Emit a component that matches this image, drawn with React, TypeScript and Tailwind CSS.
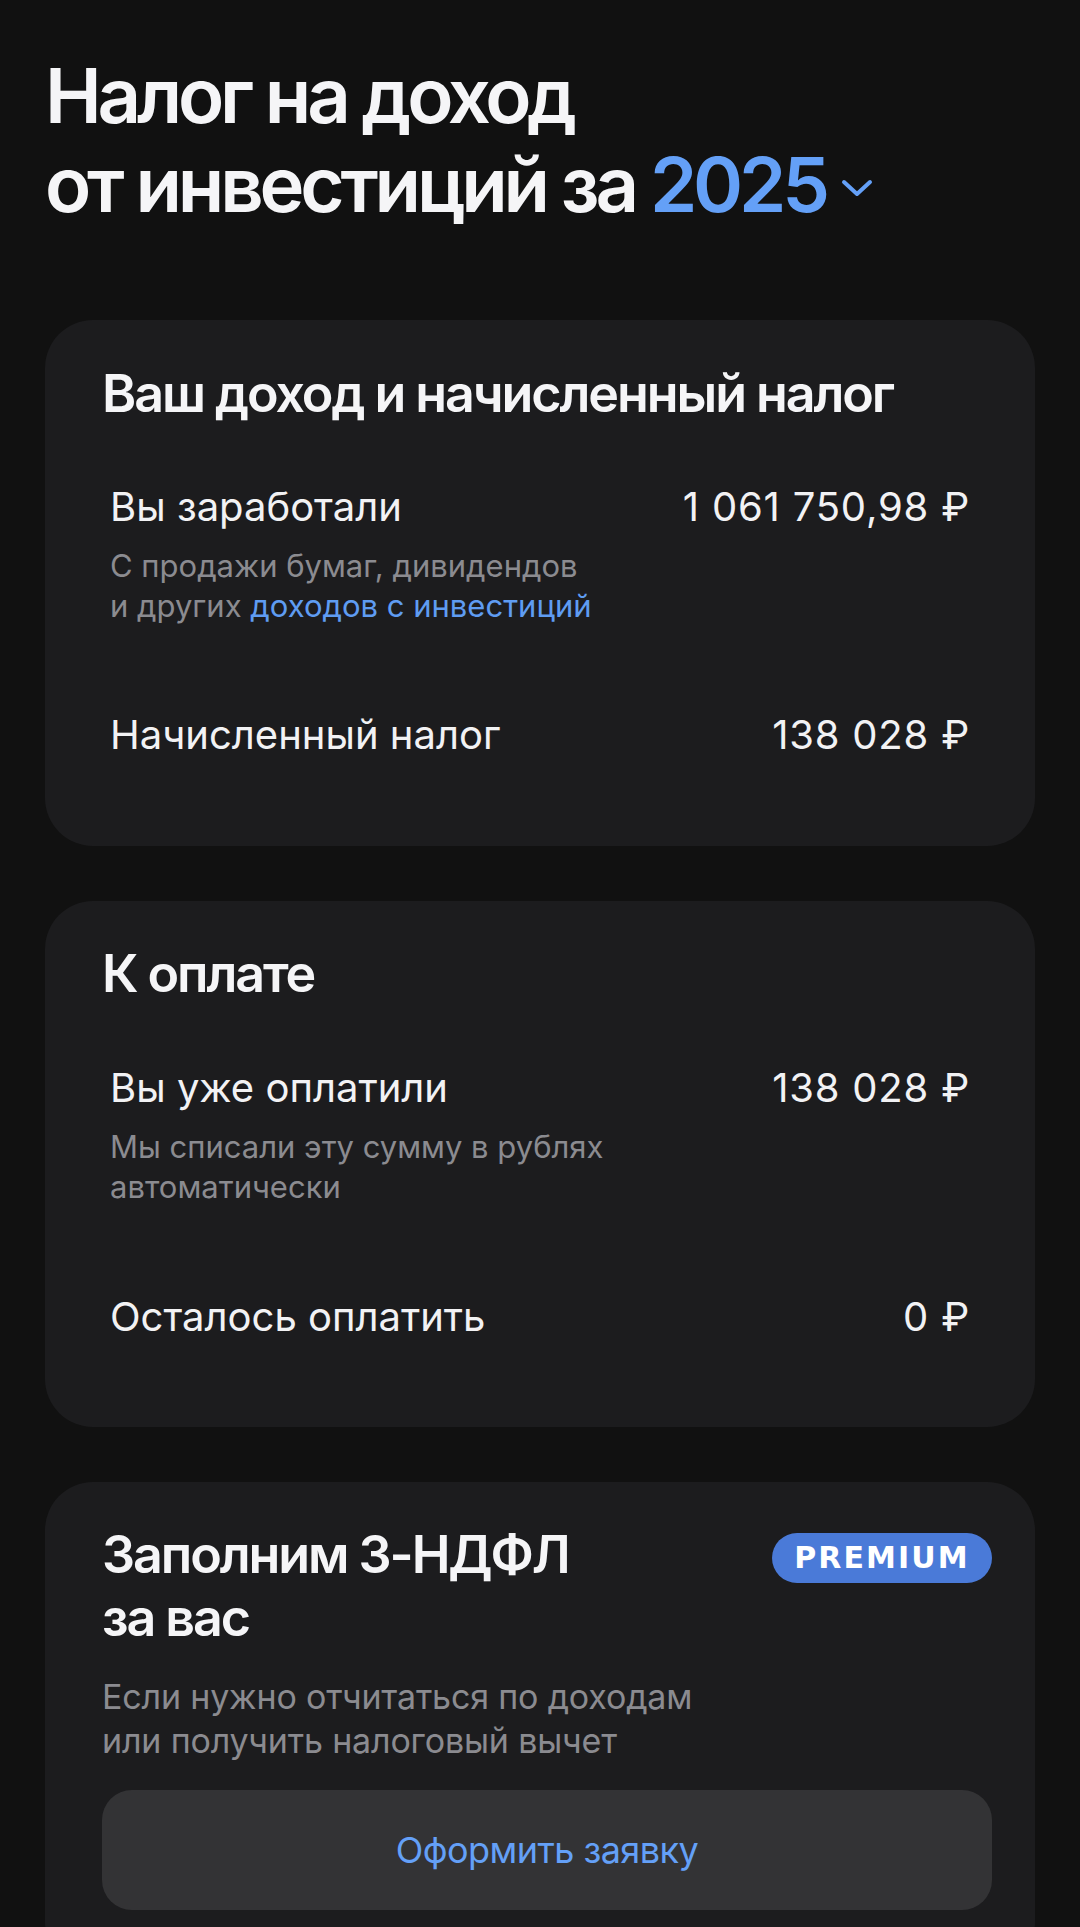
import React from "react";

const font = { fontFamily: "Inter, 'Noto Sans', sans-serif" } as const;

function Row({
  label,
  value,
  sub,
}: {
  label: string;
  value: string;
  sub?: React.ReactNode;
}) {
  return (
    <div className="px-[65px]">
      <div className="flex justify-between items-start text-[40px] leading-[46px] text-[#f2f2f4]">
        <span>{label}</span>
        <span className="tracking-[0.02em]">{value}</span>
      </div>
      {sub && (
        <div className="mt-[16px] text-[31px] leading-[40px] text-[#8b8b90]">
          {sub}
        </div>
      )}
    </div>
  );
}

export default function App() {
  return (
    <div
      className="w-[1080px] min-h-[1927px] h-[1927px] overflow-hidden bg-[#111111] text-white"
      style={font}
    >
      <div className="pl-[45px] pt-[51px]">
        <h1 className="text-[76px] leading-[89px] font-semibold tracking-[-0.055em] text-[#f5f5f7]">
          Налог на доход
          <br />
          от инвестиций за{" "}
          <span className="text-[#64a0f7]">2025</span>
          <svg
            className="inline-block ml-[15px] align-baseline relative top-[-15px]"
            width="32"
            height="18"
            viewBox="0 0 32 18"
            fill="none"
          >
            <polyline
              points="3,3 16,15 29,3"
              stroke="#64a0f7"
              strokeWidth="4"
              strokeLinecap="round"
              strokeLinejoin="round"
            />
          </svg>
        </h1>
      </div>

      <div className="mx-[45px] mt-[91px] flex flex-col gap-[55px]">
        <section className="bg-[#1c1c1e] rounded-[48px] pt-[42px] pb-[88px]">
          <h2 className="px-[57px] text-[52px] leading-[64px] font-semibold tracking-[-0.04em] text-[#f5f5f7]">
            Ваш доход и начисленный налог
          </h2>
          <div className="mt-[58px]">
            <Row
              label="Вы заработали"
              value="1 061 750,98 ₽"
              sub={
                <>
                  С продажи бумаг, дивидендов
                  <br />и других{" "}
                  <span className="text-[#5f9cf2]">доходов с инвестиций</span>
                </>
              }
            />
          </div>
          <div className="mt-[86px]">
            <Row label="Начисленный налог" value="138 028 ₽" />
          </div>
        </section>

        <section className="bg-[#1c1c1e] rounded-[48px] pt-[41px] pb-[87px]">
          <h2 className="px-[57px] text-[52px] leading-[64px] font-semibold tracking-[-0.04em] text-[#f5f5f7]">
            К оплате
          </h2>
          <div className="mt-[59px]">
            <Row
              label="Вы уже оплатили"
              value="138 028 ₽"
              sub={
                <>
                  Мы списали эту сумму в рублях
                  <br />
                  автоматически
                </>
              }
            />
          </div>
          <div className="mt-[87px]">
            <Row label="Осталось оплатить" value="0 ₽" />
          </div>
        </section>

        <section className="bg-[#1c1c1e] rounded-[48px] pt-[41px] pb-[60px] pl-[57px] pr-[43px]">
          <div className="flex justify-between items-start">
            <h2 className="text-[52px] leading-[63px] font-semibold tracking-[-0.04em] text-[#f5f5f7]">
              Заполним 3-НДФЛ
              <br />
              за вас
            </h2>
            <div className="mt-[10px] h-[50px] w-[220px] rounded-full bg-[#4a7ad8] flex items-center justify-center">
              <span
                className="text-[30px] font-bold text-white tracking-[0.07em] leading-none"
                style={{ fontFamily: "'DejaVu Sans', sans-serif" }}
              >
                PREMIUM
              </span>
            </div>
          </div>
          <p className="mt-[26px] text-[34px] leading-[44px] text-[#8b8b90] tracking-[-0.005em]">
            Если нужно отчитаться по доходам
            <br />
            или получить налоговый вычет
          </p>
          <button className="mt-[27px] w-full h-[120px] rounded-[30px] bg-[#333335] text-[36px] text-[#64a0f7] tracking-[-0.015em]">
            Оформить заявку
          </button>
        </section>
      </div>
    </div>
  );
}
